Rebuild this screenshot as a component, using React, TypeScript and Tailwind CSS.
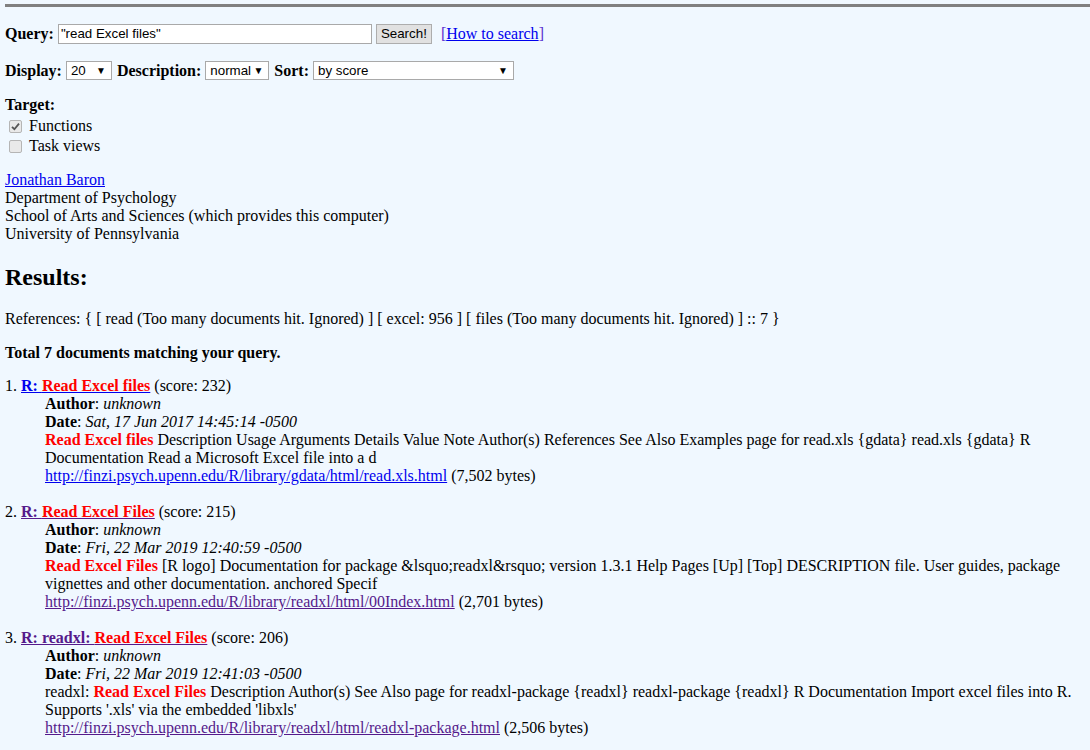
import React from 'react'

type Result = {
  n: number
  visited: boolean
  prefix: string
  hit: string
  score: number
  date: string
  lead?: string
  snippet: string
  url: string
  size: string
}

const results: Result[] = [
  {
    n: 1,
    visited: false,
    prefix: 'R: ',
    hit: 'Read Excel files',
    score: 232,
    date: 'Sat, 17 Jun 2017 14:45:14 -0500',
    snippet:
      ' Description Usage Arguments Details Value Note Author(s) References See Also Examples page for read.xls {gdata} read.xls {gdata} R Documentation Read a Microsoft Excel file into a d',
    url: 'http://finzi.psych.upenn.edu/R/library/gdata/html/read.xls.html',
    size: '7,502',
  },
  {
    n: 2,
    visited: true,
    prefix: 'R: ',
    hit: 'Read Excel Files',
    score: 215,
    date: 'Fri, 22 Mar 2019 12:40:59 -0500',
    snippet:
      ' [R logo] Documentation for package &lsquo;readxl&rsquo; version 1.3.1 Help Pages [Up] [Top] DESCRIPTION file. User guides, package vignettes and other documentation. anchored Specif',
    url: 'http://finzi.psych.upenn.edu/R/library/readxl/html/00Index.html',
    size: '2,701',
  },
  {
    n: 3,
    visited: true,
    prefix: 'R: readxl: ',
    hit: 'Read Excel Files',
    score: 206,
    date: 'Fri, 22 Mar 2019 12:41:03 -0500',
    lead: 'readxl: ',
    snippet:
      " Description Author(s) See Also page for readxl-package {readxl} readxl-package {readxl} R Documentation Import excel files into R. Supports '.xls' via the embedded 'libxls'",
    url: 'http://finzi.psych.upenn.edu/R/library/readxl/html/readxl-package.html',
    size: '2,506',
  },
]

function FakeSelect({ value, width }: { value: string; width: string }) {
  return (
    <span
      className={`inline-flex items-center justify-between h-[19px] bg-white border border-[#a9a9a9] pl-[4px] pr-[5px] text-[13.33px] text-black font-['Liberation_Sans',Arial,sans-serif] ${width}`}
    >
      <span>{value}</span>
      <span className="text-[10px] leading-none">▼</span>
    </span>
  )
}

function Box({ checked }: { checked?: boolean }) {
  return (
    <span className="inline-flex items-center justify-center w-[13px] h-[13px] ml-[4px] mr-[7px] rounded-[2px] border border-[#b5b5b5] bg-[#e9e9e9]">
      {checked && (
        <svg width="9" height="9" viewBox="0 0 9 9">
          <path d="M1 4.8 L3.4 7.2 L8 1.6" fill="none" stroke="#555" strokeWidth="1.8" />
        </svg>
      )}
    </span>
  )
}

export default function App() {
  return (
    <div className="min-h-[750px] bg-[#f0f8ff] pt-[4px] pl-[5px] pr-[5px] text-[16px] leading-[18px] text-black font-['Liberation_Serif','Times_New_Roman',serif]">
      <div className="h-[3px] bg-[#808080] -mr-[5px]" />

      {/* search form */}
      <div className="mt-[17px] flex items-center h-[20px]">
        <b>Query:</b>
        <span className="ml-[4px] w-[314px] h-[20px] bg-white border border-[#a9a9a9] px-[2px] flex items-center text-[13.33px] font-['Liberation_Sans',Arial,sans-serif]">
          "read Excel files"
        </span>
        <span className="ml-[4px] w-[56px] h-[20px] bg-[#e1e1e1] border border-[#adadad] flex items-center justify-center text-[13.33px] font-['Liberation_Sans',Arial,sans-serif]">
          Search!
        </span>
        <span className="ml-[9px] text-[#5a2fd0]">
          [<a className="underline text-[#0000ee]">How to search</a>]
        </span>
      </div>

      <div className="mt-[17px] flex items-center h-[19px]">
        <b>Display:</b>
        <span className="ml-[4px]">
          <FakeSelect value="20" width="w-[46px]" />
        </span>
        <b className="ml-[5px]">Description:</b>
        <span className="ml-[4px]">
          <FakeSelect value="normal" width="w-[64px]" />
        </span>
        <b className="ml-[5px]">Sort:</b>
        <span className="ml-[4px]">
          <FakeSelect value="by score" width="w-[201px]" />
        </span>
      </div>

      <div className="mt-[16px]">
        <b>Target:</b>
        <div className="flex items-center h-[20px] mt-[2px]">
          <Box checked />
          Functions
        </div>
        <div className="flex items-center h-[20px]">
          <Box />
          Task views
        </div>
      </div>

      <div className="mt-[15px]">
        <a className="underline text-[#0000ee]">Jonathan Baron</a>
        <br />
        Department of Psychology
        <br />
        School of Arts and Sciences (which provides this computer)
        <br />
        University of Pennsylvania
      </div>

      <h2 className="mt-[20px] text-[24px] leading-[28px] font-bold">Results:</h2>

      <p className="mt-[19px]">
        References: {'{'} [ read (Too many documents hit. Ignored) ] [ excel: 956 ] [ files (Too many
        documents hit. Ignored) ] :: 7 {'}'}
      </p>

      <p className="mt-[16px] font-bold">Total 7 documents matching your query.</p>

      {/* result list */}
      <dl className="mt-[15px]">
        {results.map(r => {
          const linkColor = r.visited ? 'text-[#551a8b]' : 'text-[#0000ee]'
          return (
            <div key={r.n} className="pb-[18px]">
              <dt>
                {r.n}.{' '}
                <a className={`underline font-bold ${linkColor}`}>
                  {r.prefix}
                  <span className="text-[#ff0000]">{r.hit}</span>
                </a>{' '}
                (score: {r.score})
              </dt>
              <dd className="ml-[40px]">
                <b>Author</b>: <i>unknown</i>
                <br />
                <b>Date</b>: <i>{r.date}</i>
                <br />
                {r.lead}
                <b className="text-[#ff0000]">{r.hit}</b>
                {r.snippet}
                <br />
                <a className={`underline ${linkColor}`}>{r.url}</a> ({r.size} bytes)
              </dd>
            </div>
          )
        })}
      </dl>
    </div>
  )
}
